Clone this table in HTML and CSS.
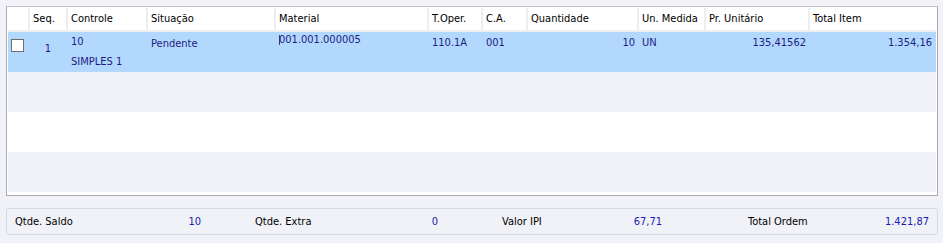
FILE: index.html
```html
<!DOCTYPE html>
<html lang="pt">
<head>
<meta charset="utf-8">
<link rel="stylesheet" href="styles.css">
</head>
<body>
<div class="grid">
  <div class="head">
    <div class="hc"></div>
    <div class="hc">Seq.</div>
    <div class="hc">Controle</div>
    <div class="hc">Situação</div>
    <div class="hc">Material</div>
    <div class="hc">T.Oper.</div>
    <div class="hc">C.A.</div>
    <div class="hc">Quantidade</div>
    <div class="hc">Un. Medida</div>
    <div class="hc">Pr. Unitário</div>
    <div class="hc last">Total Item</div>
  </div>
  <div class="row sel">
    <div class="c chk"><span class="box"></span></div>
    <div class="c seq">1</div>
    <div class="c ctrl"><span>10</span><span class="sub">SIMPLES 1</span></div>
    <div class="c sit">Pendente</div>
    <div class="c mat"><span class="caret"></span>001.001.000005</div>
    <div class="c top">110.1A</div>
    <div class="c top">001</div>
    <div class="c top num">10</div>
    <div class="c top">UN</div>
    <div class="c top num">135,41562</div>
    <div class="c top num">1.354,16</div>
  </div>
  <div class="row alt"></div>
  <div class="row"></div>
  <div class="row alt"></div>
</div>
<div class="summary">
  <div class="pair"><span class="lbl">Qtde. Saldo</span><span class="val">10</span></div>
  <div class="pair"><span class="lbl">Qtde. Extra</span><span class="val">0</span></div>
  <div class="pair"><span class="lbl">Valor IPI</span><span class="val">67,71</span></div>
  <div class="pair"><span class="lbl">Total Ordem</span><span class="val">1.421,87</span></div>
</div>
</body>
</html>
```
FILE: styles.css
```css
html, body {
  margin: 0;
  padding: 0;
  background: #f0f2f7;
  font-family: "DejaVu Sans Condensed", "DejaVu Sans", sans-serif;
  font-stretch: condensed;
  font-size: 11px;
  color: #000;
}

.grid {
  margin: 6px 5px 0 6px;
  height: 190px;
  box-sizing: border-box;
  border: 1px solid #aaaaae;
  border-top-color: #c4c4c8;
  background: #fff;
  padding: 1px 1px 0 1px;
}

.head, .row {
  display: grid;
  grid-template-columns: 22px 38px 80px 128px 153px 54px 45px 111px 67px 104px 126px;
}

.head {
  height: 24px;
  box-sizing: border-box;
  border-bottom: 2px solid #eceef2;
}

.hc {
  border-right: 2px solid #eceef2;
  padding-left: 3px;
  line-height: 22px;
  white-space: nowrap;
  overflow: hidden;
}
.hc.last { border-right: 0; }

.row {
  height: 40px;
  background: #fff;
}
.row.alt { background: #f0f2f7; }
.row.sel { background: #b3d8fd; }

.c {
  color: #1c1c84;
  padding-left: 3px;
  padding-top: 4px;
  white-space: nowrap;
  position: relative;
}
.c.num {
  text-align: right;
  padding-right: 4px;
  padding-left: 0;
}
.chk {
  padding: 7px 0 0 3px;
}
.box {
  display: block;
  width: 11px;
  height: 11px;
  border: 1px solid #6e6e6e;
  background: #fff;
}
.seq {
  text-align: center;
  padding: 10px 2px 0 0;
  color: #1c1c84;
}
.ctrl {
  display: flex;
  flex-direction: column;
  padding-top: 3px;
  gap: 7px;
}
.sit { padding-top: 5px; }
.mat { padding-top: 1px; }
.caret {
  position: absolute;
  left: 3px;
  top: 3px;
  width: 1px;
  height: 10px;
  background: #3a3a60;
  box-shadow: -2px 0 0 1px #b3d8fd;
}
.top { padding-top: 4px; }

.summary {
  margin: 12px 5px 0 6px;
  height: 27px;
  box-sizing: border-box;
  border: 1px solid #d2dae4;
  border-radius: 3px;
  background: #f0f2f7;
  display: grid;
  grid-template-columns: 240px 247px 246px 181px;
  align-items: center;
  padding-left: 8px;
}
.pair {
  display: flex;
  justify-content: space-between;
}
.pair:nth-child(1) { width: 186px; }
.pair:nth-child(2) { width: 183px; }
.pair:nth-child(3) { width: 160px; }
.pair:nth-child(4) { width: 181px; }
.val { color: #1a1ab0; }
```
